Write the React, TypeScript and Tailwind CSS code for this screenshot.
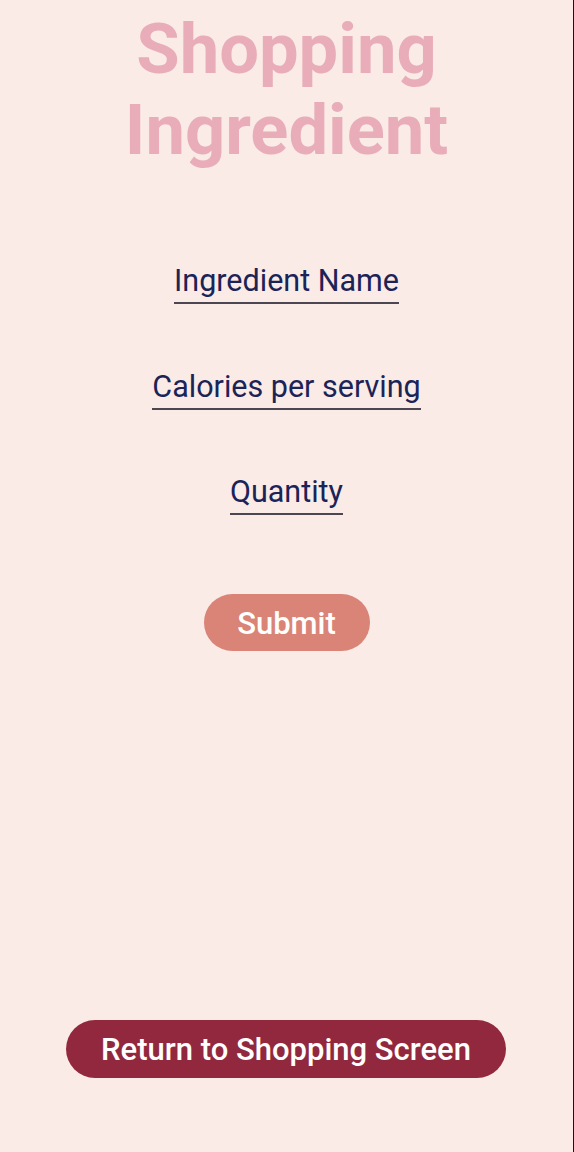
const fields = ["Ingredient Name", "Calories per serving", "Quantity"];

export default function App() {
  return (
    <div
      className="flex h-[1152px] w-full flex-col items-center border-r border-[#1c1214] bg-[#faebe7]"
      style={{ fontFamily: "Roboto, 'Noto Sans', sans-serif" }}
    >
      {/* Title */}
      <h1 className="mt-[9px] text-center text-[70.5px] leading-[81px] font-bold text-[#e9adba]">
        Shopping
        <br />
        Ingredient
      </h1>

      {/* Inputs */}
      <div className="mt-[92px] flex flex-col items-center gap-[64.5px]">
        {fields.map((f) => (
          <div
            key={f}
            className="border-b-2 border-[#4b4652] pb-[3px] text-[30.5px] leading-[36px] text-[#1b2357]"
          >
            {f}
          </div>
        ))}
      </div>

      <button className="mt-[79px] h-[57px] w-[166px] rounded-full bg-[#d98476] pt-[3px] text-[31px] font-medium text-white">
        Submit
      </button>

      <button className="mt-auto mb-[74px] ml-[-1px] h-[58px] w-[440px] rounded-full bg-[#92283d] pt-[3px] text-[31px] font-medium text-white">
        Return to Shopping Screen
      </button>
    </div>
  );
}
